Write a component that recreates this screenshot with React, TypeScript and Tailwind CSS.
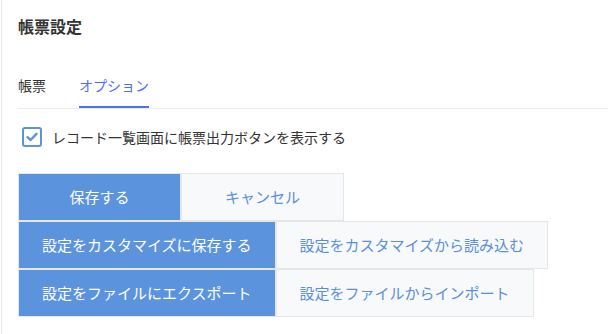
import React from "react";

const font = { fontFamily: '"Noto Sans CJK JP", "Noto Sans", sans-serif' };

function Btn({ primary, children }: { primary?: boolean; children: React.ReactNode }) {
  return (
    <button
      className={
        primary
          ? "h-[48px] min-w-[163px] px-[23px] border border-[#e3e7e8] bg-[#5b93dc] text-white text-[15px] leading-6"
          : "h-[48px] min-w-[163px] px-[23px] border border-[#e3e7e8] bg-[#f7f9fa] text-[#5a8fdc] text-[15px] leading-6"
      }
    >
      {children}
    </button>
  );
}

export default function App() {
  return (
    <div className="w-[608px] h-[334px] bg-white overflow-hidden" style={font}>
      <div className="ml-[1px] h-full border-l border-[#e6e6e6] pl-4 pt-[14px]">
        <div className="text-[16px] leading-6 font-bold text-[#333]">帳票設定</div>
        <div className="mt-[37px] flex gap-[33px] border-b border-[#ececec] text-[14px] leading-5">
          <div className="pb-[11px] border-b-2 border-transparent text-[#333]">帳票</div>
          <div className="pb-[11px] border-b-2 border-[#4f6ef7] text-[#4f6ef7]">オプション</div>
        </div>
        <div className="mt-[18px] ml-1 flex items-center gap-[10px]">
          <div className="w-5 h-5 rounded-[3px] border-2 border-[#5b93dc] flex items-center justify-center">
            <svg width="12" height="10" viewBox="0 0 12 10">
              <path d="M1.5 5.2 L4.6 8 L10.5 1.8" stroke="#5b93dc" strokeWidth="2.4" fill="none" strokeLinecap="round" strokeLinejoin="round" />
            </svg>
          </div>
          <span className="text-[14px] leading-5 text-[#333]">レコード一覧画面に帳票出力ボタンを表示する</span>
        </div>
        <div className="mt-[26px] flex flex-col items-start">
          <div className="flex">
            <Btn primary>保存する</Btn>
            <Btn>キャンセル</Btn>
          </div>
          <div className="flex">
            <Btn primary>設定をカスタマイズに保存する</Btn>
            <Btn>設定をカスタマイズから読み込む</Btn>
          </div>
          <div className="flex">
            <Btn primary>設定をファイルにエクスポート</Btn>
            <Btn>設定をファイルからインポート</Btn>
          </div>
        </div>
      </div>
    </div>
  );
}
